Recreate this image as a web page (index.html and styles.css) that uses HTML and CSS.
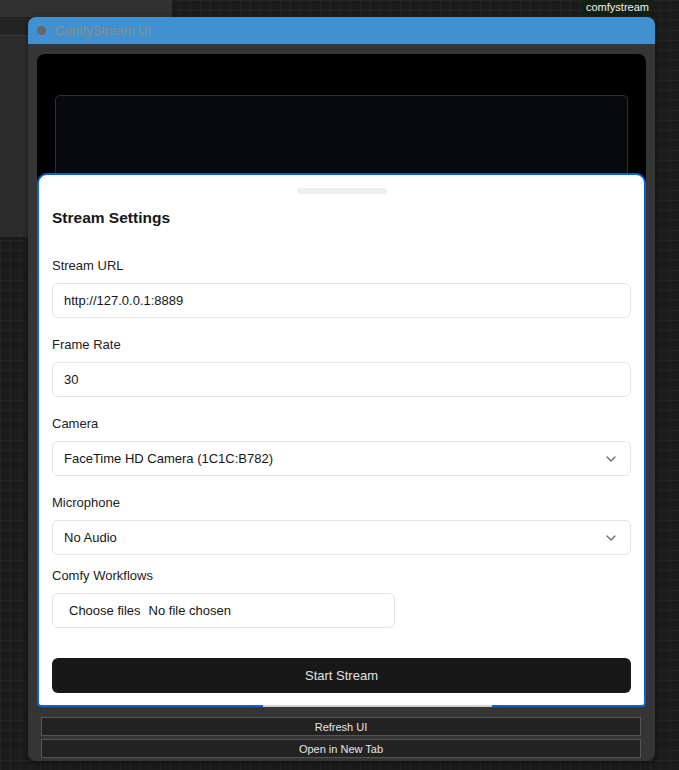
FILE: index.html
```html
<!DOCTYPE html>
<html>
<head>
<meta charset="utf-8">
<title>ComfyStream UI</title>
<link rel="stylesheet" href="styles.css">
</head>
<body>
<div class="canvas">
  <div class="side-panel">
    <div class="side-top"></div>
    <div class="side-band"></div>
    <div class="side-body"></div>
  </div>
  <div class="tag">comfystream</div>

  <div class="window">
    <div class="titlebar">
      <span class="dot"></span>
      <span class="title">ComfyStream UI</span>
    </div>
    <div class="win-body">
      <div class="stage">
        <div class="video"></div>
        <div class="sheet">
          <div class="handle"></div>
          <h2 class="sheet-title">Stream Settings</h2>

          <div class="field">
            <label class="label">Stream URL</label>
            <div class="input">http://127.0.0.1:8889</div>
          </div>
          <div class="field">
            <label class="label">Frame Rate</label>
            <div class="input">30</div>
          </div>
          <div class="field">
            <label class="label">Camera</label>
            <div class="input select">
              <span>FaceTime HD Camera (1C1C:B782)</span>
              <svg class="chev" width="10" height="6" viewBox="0 0 10 6"><path d="M1 1l4 4 4-4" fill="none" stroke="#6b6b6b" stroke-width="1.4" stroke-linecap="round" stroke-linejoin="round"/></svg>
            </div>
          </div>
          <div class="field field-tight">
            <label class="label">Microphone</label>
            <div class="input select">
              <span>No Audio</span>
              <svg class="chev" width="10" height="6" viewBox="0 0 10 6"><path d="M1 1l4 4 4-4" fill="none" stroke="#6b6b6b" stroke-width="1.4" stroke-linecap="round" stroke-linejoin="round"/></svg>
            </div>
          </div>
          <div class="field">
            <label class="label">Comfy Workflows</label>
            <div class="file">
              <span class="file-btn">Choose files</span>
              <span class="file-name">No file chosen</span>
            </div>
          </div>

          <button class="start">Start Stream</button>
          <div class="sheet-scroll"></div>
        </div>
      </div>
      <div class="actions">
        <button class="act">Refresh UI</button>
        <button class="act">Open in New Tab</button>
      </div>
    </div>
  </div>
</div>
</body>
</html>
```

FILE: styles.css
```css
* { box-sizing: border-box; }
html, body { margin: 0; padding: 0; }
body {
  width: 679px;
  height: 770px;
  overflow: hidden;
  font-family: "Liberation Sans", Arial, sans-serif;
  background-color: #1b1b1b;
  background-image:
    linear-gradient(to right, #232323 1px, transparent 1px),
    linear-gradient(to bottom, #232323 1px, transparent 1px);
  background-size: 10px 10px;
}
.canvas { position: relative; width: 679px; height: 770px; }

.side-panel {
  position: absolute; left: 0; top: 0;
  width: 172px; height: 237px;
  display: flex; flex-direction: column;
}
.side-top { height: 17px; background: #313131; }
.side-band { height: 19px; background: #232323; border-bottom: 1px solid #3a3a3a; }
.side-body { flex: 1; background: #2c2c2c; }

.tag {
  position: absolute; left: 582px; top: 0;
  height: 16px; padding: 0 5px 0 4px;
  background: #142014; color: #f2f2f2;
  font-size: 11px; line-height: 15px;
  border-radius: 0 0 4px 4px;
}

.window {
  position: absolute; left: 28px; top: 17px;
  width: 627px; height: 744px;
  display: flex; flex-direction: column;
  border-radius: 8px;
  box-shadow: 0 2px 6px rgba(0,0,0,0.35);
}
.titlebar {
  height: 27px; flex: none;
  background: #4191d0;
  border-radius: 8px 8px 0 0;
  display: flex; align-items: center;
  padding-left: 9px;
}
.dot { width: 9px; height: 9px; border-radius: 50%; background: #676767; margin-right: 9px; }
.title { color: #8c8c8c; font-size: 13px; }

.win-body {
  flex: 1;
  background: #353535;
  border-radius: 0 0 8px 8px;
  padding: 10px 9px 3px;
  display: flex; flex-direction: column;
}
.stage {
  position: relative;
  height: 653px; flex: none;
  background: #000;
  border-radius: 8px;
  padding: 41px 18px 0;
}
.video {
  height: 300px;
  background: #08090d;
  border: 1px solid #2f2f33;
  border-radius: 5px;
}

.sheet {
  position: absolute; left: 0; right: 0; bottom: 0;
  height: 534px;
  background: #fff;
  border: 2px solid #0c61d1;
  border-radius: 10px 10px 4px 4px;
  padding: 13px 13px 0;
  display: flex; flex-direction: column;
}
.handle { width: 90px; height: 6px; background: #efefef; border-radius: 3px; align-self: center; flex: none; }
.sheet-title {
  margin: 14px 0 30px; font-size: 15.5px; line-height: 20px; font-weight: bold; color: #161616;
}
.field { display: flex; flex-direction: column; margin-bottom: 19px; }
.field-tight { margin-bottom: 13px; }
.label { font-size: 13px; line-height: 16px; color: #222; margin-bottom: 9px; }
.input {
  height: 35px;
  border: 1px solid #e4e4e4;
  border-radius: 6px;
  padding: 0 11px;
  display: flex; align-items: center;
  font-size: 13px; color: #151515;
}
.select { justify-content: space-between; padding-right: 14px; }
.chev { display: block; }
.file {
  width: 343px; height: 35px;
  border: 1px solid #e4e4e4;
  border-radius: 6px;
  display: flex; align-items: center;
  padding-left: 16px;
  font-size: 13px; color: #151515;
}
.file-btn { margin-right: 8px; }
.start {
  margin-top: 11px;
  height: 35px;
  border: none;
  border-radius: 6px;
  background: #181818;
  color: #e2e2e2;
  font-family: inherit;
  font-size: 13px;
}
.sheet-scroll {
  position: absolute; left: 224px; bottom: -2px;
  width: 229px; height: 2px; background: #cfcfcf;
}

.actions {
  margin: 10px 5px 0 4px;
  display: flex; flex-direction: column; gap: 3px;
}
.act {
  height: 19px;
  background: #222;
  border: 1px solid #555;
  color: #e6e6e6;
  font-family: inherit;
  font-size: 11px;
  padding: 0;
}
```
